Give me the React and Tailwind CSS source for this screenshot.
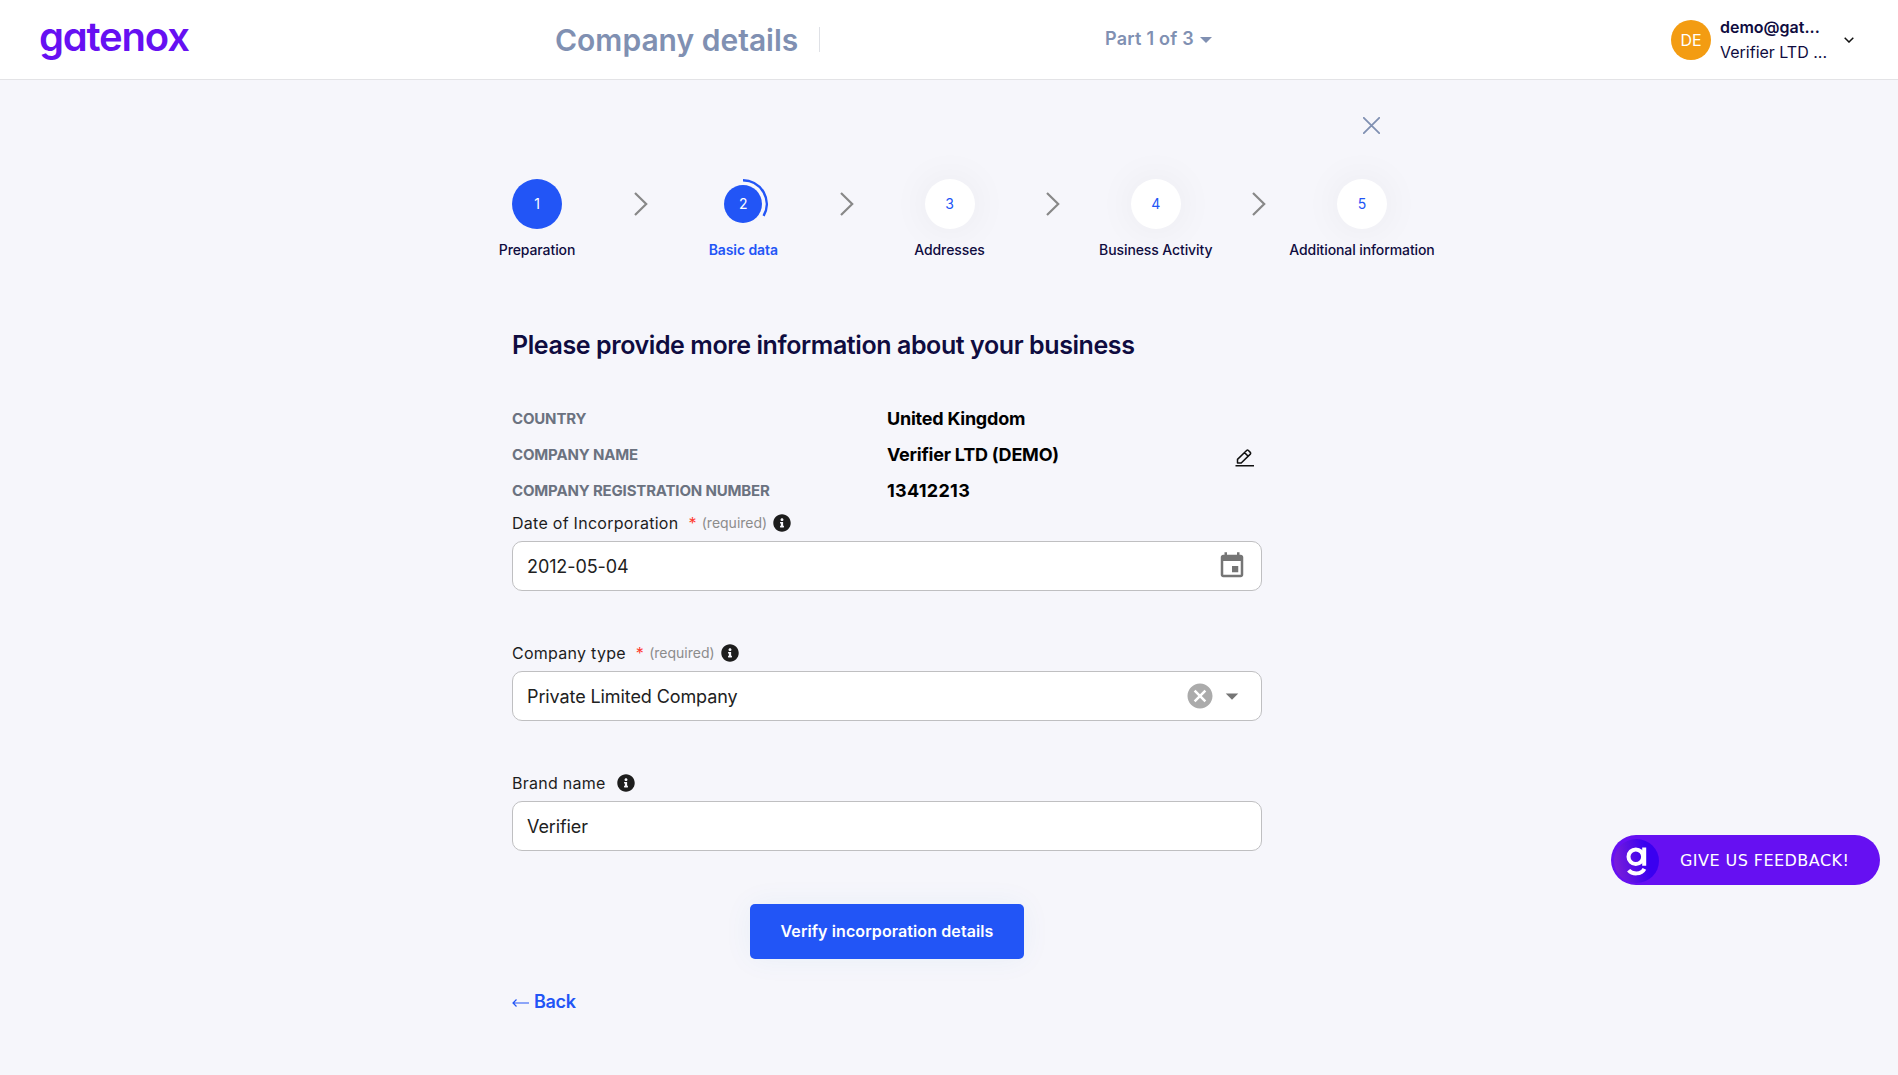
import React from "react";
import { FaInfoCircle } from "react-icons/fa";

const STEPS = [
  { n: 1, label: "Preparation", state: "done" },
  { n: 2, label: "Basic data", state: "current" },
  { n: 3, label: "Addresses", state: "todo" },
  { n: 4, label: "Business Activity", state: "todo" },
  { n: 5, label: "Additional information", state: "todo" },
];

const SUMMARY = [
  ["COUNTRY", "United Kingdom"],
  ["COMPANY NAME", "Verifier LTD (DEMO)"],
  ["COMPANY REGISTRATION NUMBER", "13412213"],
];

function Header() {
  return (
    <header className="flex h-20 items-center border-b border-[#e3e3e6] bg-white">
      <div className="w-[555px] pb-[5px] pl-[39px]">
        <span className="block text-[40px] leading-none font-semibold tracking-[-1.200px] text-[#6610f2] [font-feature-settings:'cv11']">
          gatenox
        </span>
      </div>
      <h1 className="w-[264px] text-[30px] leading-none font-semibold whitespace-nowrap text-[#8090b2]">
        Company details
      </h1>
      <div className="h-[25px] w-px bg-[#dfe1e6]" />
      <div className="flex w-[851px] items-center gap-[6px] pb-[2px] pl-[285px] text-[18px] leading-none font-semibold tracking-[0.250px] whitespace-nowrap text-[#8090b2]">
        Part 1 of 3
        <svg className="mt-[2px]" width="12" height="6" viewBox="0 0 12 6" fill="currentColor">
          <path d="M0 0h12L6 6z" />
        </svg>
      </div>
      <div className="flex size-10 items-center justify-center rounded-full bg-[#f39c12] text-[16px] text-white">
        DE
      </div>
      <div className="ml-[9px] w-[118px] text-[16px] leading-[25px] whitespace-nowrap text-[#0f0c40]">
        <div className="font-semibold">demo@gat...</div>
        <div>Verifier LTD ...</div>
      </div>
      <svg className="ml-[6px]" width="10" height="6" viewBox="0 0 10 6" fill="none" stroke="#111" strokeWidth="1.500">
        <path d="M.7.7 5 5 9.300.7" />
      </svg>
    </header>
  );
}

function StepCircle({ n, state }) {
  if (state === "current") {
    return (
      <div className="relative flex size-[50px] items-center justify-center">
        <div className="flex size-[38px] items-center justify-center rounded-full bg-[#2255f6] pb-px text-[14px] text-white">
          {n}
        </div>
        <svg className="absolute inset-0" width="50" height="50" viewBox="0 0 50 50" fill="none" stroke="#2255f6" strokeWidth="2.500">
          <path d="M25 1.250A23.750 23.750 0 0 1 45.570 36.870" />
        </svg>
      </div>
    );
  }
  return state === "done" ? (
    <div className="flex size-[50px] items-center justify-center rounded-full bg-[#2255f6] pb-px text-[14px] text-white">{n}</div>
  ) : (
    <div className="flex size-[50px] items-center justify-center rounded-full bg-white pb-px text-[14px] text-[#2255f6] shadow-[0_0_40px_rgba(0,0,0,0.06)]">
      {n}
    </div>
  );
}

function Stepper() {
  return (
    <div className="ml-[512px] flex pt-[39px]">
      {STEPS.map((s, i) => (
        <React.Fragment key={s.n}>
          {i > 0 && (
            <div className="flex h-[50px] w-[156.250px] items-center justify-center pl-px">
              <svg width="14" height="24" viewBox="0 0 14 24" fill="none" stroke="#888" strokeWidth="2.200">
                <path d="M1 1 12.200 12 1 23" />
              </svg>
            </div>
          )}
          <div className="flex w-[50px] flex-col items-center">
            <StepCircle n={s.n} state={s.state} />
            <div
              className={
                s.state === "current"
                  ? "mt-[11px] text-[14px] leading-5 font-semibold tracking-[-0.1px] whitespace-nowrap text-[#2255f6]"
                  : "mt-[11px] text-[14px] leading-5 font-medium tracking-[-0.1px] whitespace-nowrap text-[#0f0c40]"
              }
            >
              {s.label}
            </div>
          </div>
        </React.Fragment>
      ))}
    </div>
  );
}

function Field({ label, required, value, children, last }) {
  return (
    <div className={last ? "" : "mb-[50px]"}>
      <div className="flex h-[30px] items-center pb-[6px] text-[16px] tracking-[0.270px] text-[#1d1d1d]">
        <span>{label}</span>
        {required && (
          <>
            <span className="ml-[10px] text-[#ff3b30]">*</span>
            <span className="ml-[5px] pb-px text-[14px] tracking-[0px] text-[#8c8c8c]">(required)</span>
          </>
        )}
        <FaInfoCircle className={required ? "ml-[6px] size-[18px]" : "ml-[11px] size-[18px]"} />
      </div>
      <div className="flex h-[50px] items-center rounded-[10px] border border-[#bfbfc1] bg-white pr-[14px] pl-[14px] text-[18px] tracking-[-0.100px] text-[#212121]">
        <span className="flex-1">{value}</span>
        {children}
      </div>
    </div>
  );
}

export default function App() {
  return (
    <div className="h-[1075px] w-[1898px] overflow-hidden bg-[#f6f6fb] font-['Inter',sans-serif]">
      <Header />
      <div className="flex h-[60px] justify-end pt-[37px] pr-[518px]">
        <svg width="17" height="17" viewBox="0 0 17 17" fill="none" stroke="#8090b2" strokeWidth="1.800" strokeLinecap="round">
          <path d="M.8.8 16.200 16.200M16.200.8.8 16.200" />
        </svg>
      </div>
      <Stepper />

      <main className="ml-[512px] w-[750px]">
        <h2 className="mt-[70px] text-[25px] leading-[30px] font-semibold tracking-[-0.410px] whitespace-nowrap text-[#0f0c40]">
          Please provide more information about your business
        </h2>
        <div className="mt-[41px] flex h-[108px] items-center">
          <dl className="w-[723px]">
            {SUMMARY.map(([k, v]) => (
              <div key={k} className="flex h-9 items-center">
                <dt className="w-[375px] text-[15px] font-bold tracking-[-0.170px] text-[#6b7280]">{k}</dt>
                <dd
                  className={
                    /^\d+$/.test(v)
                      ? "pb-px text-[18px] font-bold tracking-[0.300px] text-black"
                      : "pb-px text-[18px] font-bold tracking-[-0.230px] text-black"
                  }
                >
                  {v}
                </dd>
              </div>
            ))}
          </dl>
          <svg className="mt-[6px]" width="20" height="18" viewBox="0 0 20 18" fill="none" stroke="#111" strokeWidth="1.500" strokeLinejoin="round">
            <path d="M.5 16.700h18.500M2.500 14V10.400L11.600 1.500a1.300 1.300 0 0 1 1.800 0l1.900 1.900a1.200 1.200 0 0 1 0 1.700L6.200 14zM9.500 3.600l3.700 3.700" />
          </svg>
        </div>

        <div className="mt-[2px]">
          <Field label="Date of Incorporation" required value="2012-05-04">
            <svg width="30" height="30" viewBox="0 0 24 24" fill="#757575">
              <path d="M17 12h-5v5h5v-5zM16 1v2H8V1H6v2H5c-1.110 0-1.990.9-1.990 2L3 19c0 1.100.89 2 2 2h14c1.100 0 2-.9 2-2V5c0-1.100-.9-2-2-2h-1V1h-2zm3 18H5V8h14v11z" />
            </svg>
          </Field>
          <Field label="Company type" required value="Private Limited Company">
            <svg className="mr-[2.500px]" width="30" height="30" viewBox="0 0 24 24" fill="#ababab">
              <path d="M12 2C6.470 2 2 6.470 2 12s4.470 10 10 10 10-4.470 10-10S17.530 2 12 2zm5 13.590L15.590 17 12 13.410 8.410 17 7 15.590 10.590 12 7 8.410 8.410 7 12 10.590 15.590 7 17 8.410 13.410 12 17 15.590z" />
            </svg>
            <svg width="30" height="30" viewBox="0 0 24 24" fill="#757575">
              <path d="M7 10l5 5 5-5z" />
            </svg>
          </Field>
          <Field label="Brand name" value="Verifier" last />
        </div>

        <div className="mt-[53px] flex justify-center">
          <button className="h-[55px] w-[274px] rounded-[5px] bg-[#2255f6] pb-[2px] text-[16px] font-semibold tracking-[0.100px] whitespace-nowrap text-white shadow-[0_0_30px_rgba(0,120,180,0.06)]">
            Verify incorporation details
          </button>
        </div>
        <div className="mt-[30px] flex h-6 items-center gap-1 text-[18px] font-semibold tracking-[-0.300px] text-[#2255f6]">
          <svg className="mt-[3px]" width="18" height="8" viewBox="0 0 18 8" fill="none" stroke="currentColor" strokeWidth="1.200">
            <path d="M17 4H1M4.500.5 1 4l3.500 3.500" />
          </svg>
          Back
        </div>
      </main>

      <button className="fixed right-[18px] bottom-[190px] flex h-[50px] w-[269px] items-center rounded-full bg-[#6610f2] pl-[3px] text-white">
        <svg className="mt-px" width="46" height="44" viewBox="0 0 46 44" fill="none">
          <defs>
            <linearGradient id="mark" x1="0" y1="0.6" x2="1" y2="0.4">
              <stop offset="0" stopColor="#7a1fd8" />
              <stop offset="0.75" stopColor="#3a00f0" />
              <stop offset="1" stopColor="#3a00f0" />
            </linearGradient>
          </defs>
          <ellipse cx="22.500" cy="22" rx="22.500" ry="22" fill="url(#mark)" />
          <g stroke="#fff" strokeWidth="4">
            <circle cx="21.800" cy="17.700" r="7.300" />
            <path d="M30.200 8.400v18.300M14.600 31.200c3.500 4.200 12.700 4.700 15.800-1.300" />
          </g>
        </svg>
        <span className="ml-[20px] pt-[2px] font-['DejaVu_Sans',sans-serif] text-[16px] tracking-[0.450px] whitespace-nowrap">GIVE US FEEDBACK!</span>
      </button>
    </div>
  );
}
